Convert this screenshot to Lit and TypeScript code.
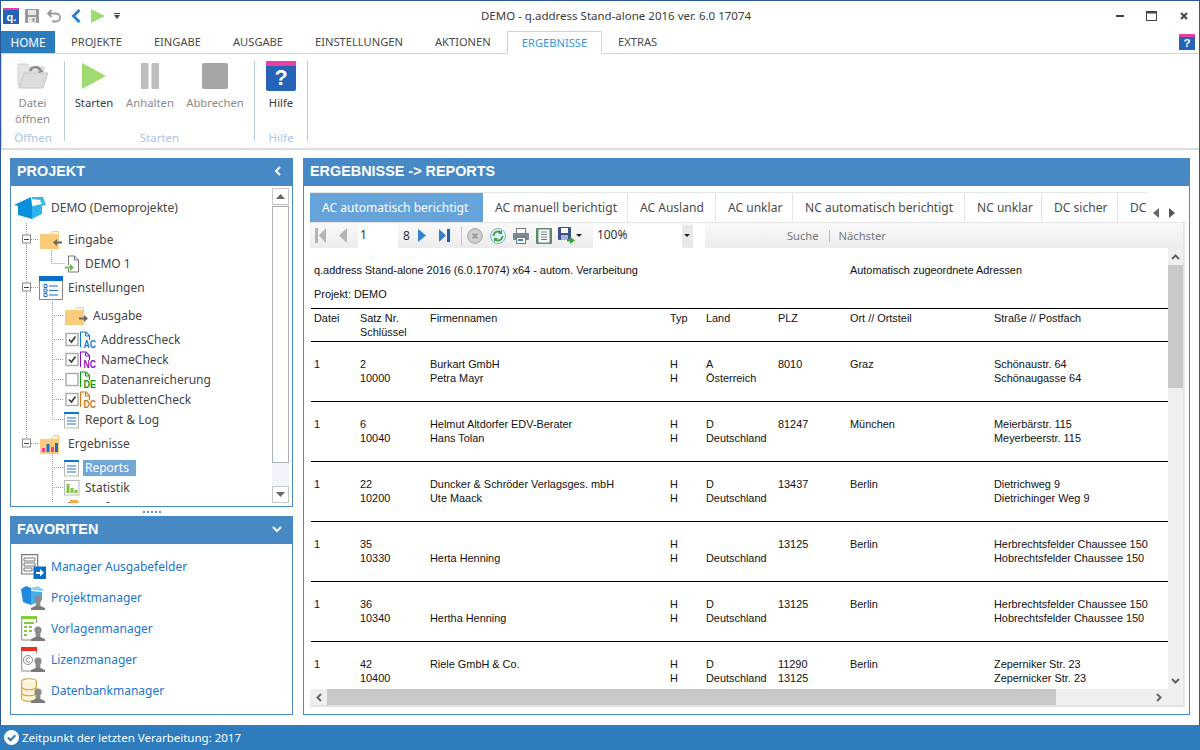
import { LitElement, html, css, svg } from "lit";
import { customElement } from "lit/decorators.js";

const BLUE = "#0f7bd0";
const person = (x: number, y: number) => svg`
  <circle cx="${x + 7}" cy="${y + 5}" r="3.6" fill="#8a8a8a"/><rect x="${x + 4.6}" y="${y + 4}" width="4.8" height="8" fill="#8a8a8a"/>
  <path d="M${x} ${y + 16} v-2 l4.5 -2 h5 l4.5 2 v2z" fill="#7a7a7a"/>`;

const folder = (arrow: "l" | "r" | "") => html`<svg width="26" height="20" viewBox="0 0 26 20">
  <path d="M0 4h9l3-3h6a1 1 0 0 1 1 1v17H0z" fill="#fbcb7c"/><path d="M10 4l2.500-2h5.500v2z" fill="#fff" opacity=".85"/>
  ${arrow === "l" ? svg`<path d="M13 12.500l4-3.500v2.500h5v2h-5v2.500z" fill="#666"/>` : ""}
  ${arrow === "r" ? svg`<path d="M23 12.500l-4-3.500v2.500h-5v2h5v2.500z" fill="#666"/>` : ""}
</svg>`;

const tinyList = html`<svg width="16" height="17" viewBox="0 0 16 17">
  <rect x=".5" y="1.5" width="14" height="14.5" fill="#fff" stroke="#b8b8b8"/><rect x="0" y="0" width="15" height="2" fill="#0a78d2"/>
  <path d="M3 6h9M3 9h9M3 12h9" stroke="#1a76c8" stroke-width="1.2"/></svg>`;

const docIcon = (c: string, t: string, checked: boolean) => html`<svg width="33" height="20" viewBox="0 -1 33 20">
  <rect x="1" y="2.500" width="12" height="12" fill="#fff" stroke="#a9a9a9" stroke-width="1.4"/>
  ${checked ? svg`<path d="M4 8.500l2.400 2.600L10.500 5.500" fill="none" stroke="#444" stroke-width="1.800"/>` : ""}
  <path d="M15.500 16V1h5.500l3.500 3.500V9" fill="${c === "#c47a1e" ? "#f7f5ea" : "#fff"}" stroke="${c}" stroke-width="1.100"/>
  <path d="M20.500 1.500v3.500h3.500" fill="none" stroke="${c}" stroke-width="1"/>
  <text x="18.500" y="16.500" class="tiny" fill="${c}" textLength="12.500" lengthAdjust="spacingAndGlyphs">${t}</text></svg>`;

const TREE: any[] = [
  { mt: 0, x: 14, tx: 51, t: "DEMO (Demoprojekte)", icon: html`<svg width="33" height="24" viewBox="0 0 33 24">
    <path d="M0 9 17 1l1 8v14L4 19v-9z" fill="#0a8fdc"/><path d="M18 23V10l10-2v10z" fill="#30b4ee"/><path d="M18 1l11 0 3 8-4 1-10-1z" fill="#35b8ee"/><path d="M18 3l8 1 2 4-10 2z" fill="#fff"/></svg>` },
  { mt: 12, x: 40, tx: 68, t: "Eingabe", icon: folder("l") },
  { mt: 4, x: 65, tx: 85, t: "DEMO 1", icon: html`<svg width="15" height="18" viewBox="0 0 15 18"><path d="M3.500 10V1h6l4 4v12h-10v-3" fill="#fff" stroke="#777"/><path d="M9.500 1v4h4" fill="none" stroke="#777"/><path d="M0 11.500h5V9l4 3.500L5 16v-2.500H0z" fill="#6cc04a"/></svg>` },
  { mt: 4, x: 39, tx: 68, t: "Einstellungen", icon: html`<svg width="24" height="24" viewBox="0 0 24 24"><rect x=".5" y=".5" width="23" height="23" fill="#fff" stroke="#888"/><rect width="24" height="5" fill="#0a6ec8"/><path d="M5 8.500h3v3H5zM5 13h3v3H5zM5 17.500h3v3H5z" fill="none" stroke="#2070c0"/><path d="M10 10h9M10 14.500h9M10 19h9" stroke="#2070c0" stroke-width="1.200"/></svg>` },
  { mt: 8, x: 65, tx: 93, t: "Ausgabe", icon: folder("r") },
  { mt: 4, x: 65, tx: 101, t: "AddressCheck", icon: docIcon(BLUE, "AC", true) },
  { mt: 0, x: 65, tx: 101, t: "NameCheck", icon: docIcon("#8a12c4", "NC", true) },
  { mt: 0, x: 65, tx: 101, t: "Datenanreicherung", icon: docIcon("#0c9a10", "DE", false) },
  { mt: 0, x: 65, tx: 101, t: "DublettenCheck", icon: docIcon("#c47a1e", "DC", true) },
  { mt: 0, x: 64, tx: 85, t: "Report & Log", icon: tinyList },
  { mt: 4, x: 40, tx: 68, t: "Ergebnisse", icon: html`<svg width="20" height="19" viewBox="0 0 20 19"><path d="M0 4h10l2-2 2-2h4a1 1 0 0 1 1 1v18H0z" fill="#fbcb7c"/><path d="M11 4l3-3h4v3z" fill="#fff" stroke="#fbcb7c" stroke-width=".8"/><rect x="2" y="13" width="3" height="4" fill="#ec3fa0"/><rect x="6.500" y="9" width="3" height="8" fill="#1f6fc8"/><rect x="11" y="12" width="3" height="5" fill="#ec3fa0"/><rect x="15" y="8" width="3" height="9" fill="#1f6fc8"/></svg>` },
  { mt: 4, x: 64, tx: 85, t: "Reports", icon: tinyList, sel: true },
  { mt: 0, x: 64, tx: 85, t: "Statistik", icon: html`<svg width="16" height="16" viewBox="0 0 16 16"><rect x=".5" y=".5" width="14.500" height="14.500" fill="#fff" stroke="#b8b8b8"/><rect x="2.500" y="4" width="3" height="9" fill="#7fc241"/><rect x="6.500" y="8" width="3" height="5" fill="#7fc241"/><rect x="10.500" y="10" width="3" height="3" fill="#7fc241"/></svg>` },
  { mt: 0, x: 64, tx: 85, t: "Prüfung", icon: html`<svg width="16" height="16" viewBox="0 0 16 16"><path d="M0 4l6-2v12H0z" fill="#1f7ad0"/><path d="M6 0h7l3 4v10H6z" fill="#f9a942"/></svg>` },
];

const FAV: any[] = [
  { t: "Manager Ausgabefelder", icon: html`<svg width="25" height="25" viewBox="0 0 25 25"><path d="M13 20H.7V.7h16v12" fill="#fff" stroke="#777" stroke-width="1.200"/><path d="M3 4h11v3H3zM3 9h11v3H3zM3 14h8v3H3z" fill="none" stroke="#777"/><rect x="12.500" y="12.500" width="12.500" height="12.500" fill="#0a6ec8"/><path d="M15 18h4v-3l4 3.700-4 3.700V20h-4z" fill="#fff"/></svg>` },
  { t: "Projektmanager", icon: html`<svg width="25" height="25" viewBox="0 0 25 25"><path d="M0 4l5-3 5 2v17l-8-3z" fill="#1f8ae0"/><path d="M10 3l7-2 6 4-2 1-11-1z" fill="#8fd0f2"/><path d="M10 6l11 1v8l-11 5z" fill="#44aee8"/>${person(10, 9)}</svg>` },
  { t: "Vorlagenmanager", icon: html`<svg width="25" height="25" viewBox="0 0 25 25"><path d="M10 24H.7V1h15v6" fill="#fff" stroke="#888"/><rect width="16" height="3" fill="#84cc3c"/><path d="M3 6h10v2H3zM3 10h3v2H3zM3 14h3v2H3zM3 18h3v2H3zM8 10h3v2H8zM8 14h3v2H8z" fill="#84cc3c"/>${person(10, 9)}</svg>` },
  { t: "Lizenzmanager", icon: html`<svg width="25" height="25" viewBox="0 0 25 25"><path d="M10 24H.7V1h15v6" fill="#fff" stroke="#888"/><rect width="16" height="4" fill="#f0301e"/><circle cx="7" cy="13" r="4.500" fill="#fff" stroke="#888"/><path d="M9 11.500a2.200 2.200 0 1 0 0 3" fill="none" stroke="#888"/>${person(10, 9)}</svg>` },
  { t: "Datenbankmanager", icon: html`<svg width="25" height="25" viewBox="0 0 25 25"><ellipse cx="8" cy="3.500" rx="7.300" ry="2.800" fill="#fff" stroke="#d8a020" stroke-width="1.100"/><path d="M.7 3.500v17c0 1.500 3.300 2.800 7.300 2.800s7.300-1.300 7.300-2.800v-17" fill="#fdf4de" stroke="#d8a020" stroke-width="1.100"/><path d="M.7 9c0 1.500 3.300 2.800 7.300 2.800S15.300 10.500 15.300 9M.7 15c0 1.500 3.300 2.800 7.300 2.800s7.300-1.300 7.300-2.800" fill="none" stroke="#d8a020" stroke-width="1.100"/>${person(10, 9)}</svg>` },
];

const RTABS = [
  ["AC automatisch berichtigt", 173], ["AC manuell berichtigt", 145], ["AC Ausland", 88], ["AC unklar", 77],
  ["NC automatisch berichtigt", 172], ["NC unklar", 77], ["DC sicher", 76], ["DC unklar", 76],
] as [string, number][];

const ROWS = [
  ["1", "2", "Burkart GmbH", "H", "A", "8010", "Graz", "Schönaustr. 64", "10000", "Petra Mayr", "H", "Österreich", "", "", "Schönaugasse 64"],
  ["1", "6", "Helmut Altdorfer EDV-Berater", "H", "D", "81247", "München", "Meierbärstr. 115", "10040", "Hans Tolan", "H", "Deutschland", "", "", "Meyerbeerstr. 115"],
  ["1", "22", "Duncker & Schröder Verlagsges. mbH", "H", "D", "13437", "Berlin", "Dietrichweg 9", "10200", "Ute Maack", "H", "Deutschland", "", "", "Dietrichinger Weg 9"],
  ["1", "35", "", "H", "", "13125", "Berlin", "Herbrechtsfelder Chaussee 150", "10330", "Herta Henning", "H", "Deutschland", "", "", "Hobrechtsfelder Chaussee 150"],
  ["1", "36", "", "H", "D", "13125", "Berlin", "Herbrechtsfelder Chaussee 150", "10340", "Hertha Henning", "H", "Deutschland", "", "", "Hobrechtsfelder Chaussee 150"],
  ["1", "42", "Riele GmbH & Co.", "H", "D", "11290", "Berlin", "Zeperniker Str. 23", "10400", "", "H", "Deutschland", "13125", "", "Zepernicker Str. 23"],
];

@customElement("app-root")
export class AppRoot extends LitElement {
  static styles = css`
    :host { display: block; width: 1200px; height: 750px; font-family: "Noto Sans", "Open Sans", sans-serif; font-size: 12px; color: #444; overflow: hidden; background: #fff; }
    .win { box-sizing: border-box; height: 750px; display: flex; flex-direction: column; border-top: 1px solid #2b579a; border-left: 1px solid #2b579a; border-right: 1px solid #2b579a; }
    .titlebar { height: 30px; display: flex; align-items: center; position: relative; flex: none; }
    .qat { display: flex; align-items: center; padding-left: 2px; height: 30px; }
    .qat svg { display: block; }
    .title { position: absolute; left: 0; right: 0; top: 0; line-height: 30px; text-align: center; color: #3c3c3c; pointer-events: none; font-size: 11.500px; padding-left: 32px; }
    .ctl { margin-left: auto; display: flex; align-items: center; }
    .menu { height: 22px; display: flex; align-items: stretch; flex: none; position: relative; }
    .menu div { padding: 0 16px; line-height: 22px; font-size: 11.150px; white-space: nowrap; color: #4a4a4a; }
    .menu .home { background: #2b7cbd; color: #fff; padding: 0; width: 54px; box-sizing: border-box; text-align: center; font-size: 11.800px; }
    .menu .act { color: #3c94dc; border: 1px solid #d4d4d4; border-bottom: 1px solid #fff; padding: 0 14px; margin-bottom: -1px; z-index: 2; background: #fff; box-sizing: border-box; line-height: 22px; }
    .menu .help { margin-left: auto; padding: 3px 4px 0 0; line-height: 0; }
    .ribbon { height: 97px; flex: none; box-sizing: border-box; display: flex; border-top: 1px solid #d4d4d4; border-bottom: 2px solid #dcdcdc; border-left: 1px solid #d4d4d4; background: #fff; }
    .grp { display: flex; flex-direction: column; border-right: 1px solid #b9c9de; margin: 7px 0; box-sizing: border-box; }
    .grp .btns { display: flex; flex: 1; }
    .grp .cap { text-align: center; color: #a9c5e6; font-size: 11.500px; line-height: 14px; margin-bottom: -4px; }
    .rb { display: flex; flex-direction: column; align-items: center; text-align: center; line-height: 16px; color: #8b8b8b; font-size: 11.300px; }
    .ib { height: 28px; margin: 1px 0 5px; display: flex; align-items: center; }
    .ib svg { display: block; flex: none; }
    .rb.on { color: #3a3a3a; }
    .body { flex: 1; min-height: 0; display: flex; gap: 10px; padding: 8px 9px 10px 9px; }
    .left { width: 283px; flex: none; display: flex; flex-direction: column; }
    .phead { height: 28px; background: #4689c4; color: #fff; font: 700 14.400px/26px "Liberation Sans", sans-serif; padding: 0 0 2px 7px; box-sizing: border-box; display: flex; align-items: center; justify-content: space-between; flex: none; }
    .phead svg { margin-right: 11px; }
    .treebox { height: 321px; box-sizing: border-box; flex: none; border: 1px solid #4689c4; border-top: 0; display: flex; overflow: hidden; }
    .tree { flex: 1; position: relative; overflow: hidden; padding-top: 12px; box-sizing: border-box; margin-bottom: 3px; }
    .conn { position: absolute; left: 0; top: 0; pointer-events: none; }
    .row { height: 20px; display: flex; align-items: center; white-space: nowrap; font-size: 12px; color: #444; position: relative; }
    .slot { display: flex; align-items: center; flex: none; height: 20px; }
    .slot svg { display: block; flex: none; }
    .lbl { line-height: 16px; }
    .lbl.sel { background: #72a6d4; color: #fff; margin-left: -2px; padding: 0 2px; width: 49px; }
    .tiny { font: 700 10px "Liberation Sans", sans-serif; }
    .sb { width: 17px; flex: none; margin: 2px 3px 3px 0; display: flex; flex-direction: column; background: #f0f3f9; }
    .sbtn { height: 17px; box-sizing: border-box; border: 1px solid #c8c8c8; background: #fff; display: flex; align-items: center; justify-content: center; flex: none; }
    .sthumb { height: 257px; box-sizing: border-box; border: 1px solid #a9b1b9; background: #fff; flex: none; margin-top: 1px; }
    .strack { flex: 1; }
    .grip { height: 9px; flex: none; display: flex; justify-content: center; align-items: center; gap: 2px; }
    .grip i { width: 2px; height: 2px; background: #5a8fc0; display: block; }
    .favbox { flex: 1; min-height: 0; border: 1px solid #4689c4; border-top: 0; padding-top: 7px; box-sizing: border-box; }
    .fav { height: 31px; display: flex; align-items: center; padding-left: 10px; gap: 5px; color: #1a76c8; font-size: 12px; white-space: nowrap; }
    .fav svg { display: block; width: 25px; height: 25px; flex: none; }
    .right { flex: 1; min-width: 0; display: flex; flex-direction: column; }
    .rbox { flex: 1; min-height: 0; border: 1px solid #4689c4; border-top: 0; padding: 6px 6px 7px 6px; display: flex; flex-direction: column; }
    .rtabs { height: 30px; flex: none; display: flex; position: relative; }
    .rstrip { display: flex; width: 838px; overflow: hidden; flex: none; border-top: 1px solid #e8e8e8; box-sizing: border-box; }
    .rtab { flex: none; box-sizing: border-box; border-right: 1px solid #e4e4e4; text-align: left; padding-left: 12px; line-height: 30px; font-size: 12.050px; white-space: nowrap; color: #4a4a4a; overflow: hidden; }
    .rtab.act { background: #66a3d9; color: #fff; border: 0; margin-top: -1px; line-height: 31px; height: 31px; }
    .rarrows { display: flex; align-items: center; gap: 10px; padding: 12px 0 0 5px; }
    .frame { flex: 1; min-height: 0; display: flex; flex-direction: column; border-right: 2px solid #e3e3e3; border-bottom: 2px solid #e3e3e3; width: 873px; }
    .tb { height: 26px; flex: none; display: flex; align-items: center; background: linear-gradient(#f9f9f9, #ececec); border-top: 1px solid #e4e4e4; box-sizing: border-box; position: relative; }
    .tb .ic { display: block; flex: none; }
    .tb .in { background: #fff; height: 25px; line-height: 24px; flex: none; box-sizing: border-box; color: #333; font-size: 12px; }
    .tsep { width: 1px; height: 18px; background: #c4c4c4; flex: none; }
    .tt { color: #777; font-size: 11.200px; }
    .rep { flex: 1; min-height: 0; display: grid; grid-template-columns: 1fr 15px; grid-template-rows: 1fr 16px; background: #efefef; }
    .paper { background: #fff; overflow: hidden; font: 10.900px/14px "Liberation Sans", sans-serif; color: #111; position: relative; }
    .paper .hdr { display: flex; padding: 15px 0 0 4px; height: 14px; }
    .paper .hdr span:first-child { width: 536px; }
    .paper .proj { padding: 10px 0 7px 4px; }
    .g { display: grid; grid-template-columns: 46px 70px 240px 36px 72px 72px 144px 1fr; margin-left: 1px; padding-left: 3px; border-top: 1px solid #000; white-space: nowrap; }
    .g.h { height: 33px; padding-top: 2px; box-sizing: border-box; }
    .g.d { height: 60px; padding-top: 15px; box-sizing: border-box; }
    .vsb { display: flex; flex-direction: column; align-items: center; }
    .vsb .u { height: 17px; display: flex; align-items: center; justify-content: center; flex: none; }
    .vsb .th { height: 123px; width: 15px; background: #c8c8c8; flex: none; }
    .vsb .sp { flex: 1; }
    .hsb { display: flex; align-items: center; }
    .hsb .l { width: 17px; display: flex; justify-content: center; flex: none; }
    .hsb .th { height: 16px; width: 729px; background: #c8c8c8; flex: none; }
    .hsb .sp { flex: 1; }
    .hsb .r { width: 18px; display: flex; justify-content: center; flex: none; }
    .status { height: 25px; flex: none; background: #2e7bbd; margin: 0 -1px; display: flex; align-items: center; color: #fff; font-size: 11.500px; padding-left: 4px; gap: 3px; }
    .status svg { display: block; }
  `;

  private help(s: number) {
    const t = Math.round(s * 0.17);
    return html`<svg width="${s}" height="${s}" viewBox="0 0 ${s} ${s}" style="display:block">
      <rect y="0" width="${s}" height="${s}" rx="${s > 20 ? 2 : 0}" fill="#2563b8"/>
      <rect y="0" width="${s}" height="${t}" fill="#e93fa2"/>
      <text x="${s / 2}" y="${s * 0.8}" text-anchor="middle" fill="#fff" font-family="Liberation Sans,sans-serif" font-weight="700" font-size="${s * 0.72}">?</text></svg>`;
  }

  private connectors() {
    const d = "#9a9a9a";
    const ln = (x1: number, y1: number, x2: number, y2: number) =>
      svg`<line x1="${x1 - 11}" y1="${y1 - 186}" x2="${x2 - 11}" y2="${y2 - 186}" stroke="${d}" stroke-dasharray="1 1"/>`;
    const exp = (y: number) => svg`<rect x="${22 - 10.5}" y="${y - 4 - 186}" width="8" height="8" fill="#fff" stroke="#888"/><line x1="${24 - 11}" x2="${29 - 11}" y1="${y + 0.5 - 186}" y2="${y + 0.5 - 186}" stroke="#444"/>`;
    return svg`<svg class="conn" width="262" height="320">
      ${ln(26.5, 223, 26.5, 443)}
      ${ln(31, 239.5, 39, 239.5)}${ln(31, 287.5, 39, 287.5)}${ln(31, 443.5, 39, 443.5)}
      ${ln(51.5, 251, 51.5, 263)}${ln(51.5, 263.5, 65, 263.5)}
      ${ln(52.5, 299, 52.5, 419)}
      ${[315, 339, 359, 379, 399, 419].map((y) => ln(52, y + 0.5, 64, y + 0.5))}
      ${ln(52.5, 453, 52.5, 507)}
      ${[467, 487].map((y) => ln(52, y + 0.5, 64, y + 0.5))}
      ${exp(239)}${exp(287)}${exp(443)}
    </svg>`;
  }

  render() {
    const tri = (d: string, c = "#666", w = 9, h = 7) => html`<svg width="${w}" height="${h}" viewBox="0 0 ${w} ${h}" class="ic"><path d="${d}" fill="${c}"/></svg>`;
    return html`<div class="win">
      <div class="titlebar">
        <div class="qat">
          <svg width="16" height="16" viewBox="0 0 16 16"><rect width="16" height="16" fill="#2563b8"/><rect width="16" height="2" fill="#e93fa2"/><text x="3.500" y="13" fill="#fff" font-family="Liberation Sans,sans-serif" font-weight="700" font-size="11">q.</text></svg>
          <svg width="14" height="14" viewBox="0 0 14 14" style="margin-left:6px"><path d="M0 0h14v14H0z" fill="#9a9a9a"/><rect x="3" y="1" width="8" height="5" fill="#e6e6e6"/><rect x="3" y="8" width="8" height="6" fill="#e6e6e6"/><rect x="7.500" y="9" width="2" height="4" fill="#9a9a9a"/></svg>
          <svg width="14" height="14" viewBox="0 0 14 14" style="margin-left:8px"><path d="M1 4.500h8a4 4 0 0 1 0 8H5M4.500 1 1 4.500 4.500 8" fill="none" stroke="#9a9a9a" stroke-width="1.800"/></svg>
          <svg width="10" height="14" viewBox="0 0 10 14" style="margin-left:10px"><path d="M8.500 1 2.500 7l6 6" fill="none" stroke="#2f80d0" stroke-width="3"/></svg>
          <svg width="14" height="14" viewBox="0 0 14 14" style="margin-left:10px"><path d="M0 0l14 7-14 7z" fill="#9fdc6f"/></svg>
          <svg width="6" height="6" viewBox="0 0 6 6" style="margin-left:9px"><path d="M0 0h6v1H0zM0 2h6L3 6z" fill="#444"/></svg>
        </div>
        <div class="title">DEMO - q.address Stand-alone 2016 ver. 6.0 17074</div>
        <div class="ctl">
          <svg width="8" height="2" viewBox="0 0 8 2"><rect width="8" height="2" fill="#444"/></svg>
          <svg width="11" height="10" viewBox="0 0 11 10" style="margin-left:22px"><rect x=".5" y=".5" width="10" height="9" fill="none" stroke="#444"/><rect width="11" height="2.500" fill="#444"/></svg>
          <svg width="8" height="8" viewBox="0 0 8 8" style="margin:0 11px 0 23px"><path d="M1 1l6 6M7 1 1 7" stroke="#444" stroke-width="2"/></svg>
        </div>
      </div>
      <div class="menu">
        <div class="home">HOME</div><div>PROJEKTE</div><div>EINGABE</div><div>AUSGABE</div><div>EINSTELLUNGEN</div><div>AKTIONEN</div>
        <div class="act">ERGEBNISSE</div><div>EXTRAS</div>
        <div class="help">${this.help(16)}</div>
      </div>
      <div class="ribbon">
        <div class="grp" style="width:63px">
          <div class="btns"><div class="rb" style="width:61px">
            <div class="ib"><svg width="32" height="28" viewBox="0 0 32 28"><path d="M1 24V2h9l3 3h14v5H8L2 24" fill="#e4e4e4" stroke="#d0d0d0"/><path d="M7 11h24l-5 15H2z" fill="#dcdcdc" stroke="#c8c8c8"/><path d="M13 9c2-5 8-5 10-1" fill="none" stroke="#8a8a8a" stroke-width="2.500"/><path d="M26 10l-5 1 3-5z" fill="#8a8a8a"/></svg></div>
            <span>Datei<br/>öffnen</span></div></div>
          <div class="cap">Öffnen</div>
        </div>
        <div class="grp" style="width:190px">
          <div class="btns">
            <div class="rb on" style="width:56px;margin-left:1px"><div class="ib"><svg width="24" height="26" viewBox="0 0 24 26"><path d="M0 0l24 13L0 26z" fill="#9fdc6f"/></svg></div><span>Starten</span></div>
            <div class="rb" style="width:56px"><div class="ib"><svg width="18" height="26" viewBox="0 0 18 26"><rect width="7.500" height="26" rx="1" fill="#bdbdbd"/><rect x="10.500" width="7.500" height="26" rx="1" fill="#bdbdbd"/></svg></div><span>Anhalten</span></div>
            <div class="rb" style="width:74px"><div class="ib"><svg width="26" height="26" viewBox="0 0 26 26"><rect width="26" height="26" rx="2" fill="#a6a6a6"/></svg></div><span>Abbrechen</span></div>
          </div>
          <div class="cap">Starten</div>
        </div>
        <div class="grp" style="width:53px">
          <div class="btns"><div class="rb on" style="width:52px"><div class="ib">${this.help(30)}</div><span>Hilfe</span></div></div>
          <div class="cap">Hilfe</div>
        </div>
      </div>
      <div class="body">
        <div class="left">
          <div class="phead"><span>PROJEKT</span><svg width="8" height="10" viewBox="0 0 8 10"><path d="M6 1 2 5l4 4" fill="none" stroke="#fff" stroke-width="2"/></svg></div>
          <div class="treebox">
            <div class="tree">
              ${TREE.map((r) => html`<div class="row" style="margin-top:${r.mt}px;padding-left:${r.x - 11}px">
                <div class="slot" style="width:${r.tx - r.x}px">${r.icon}</div>
                <span class="lbl ${r.sel ? "sel" : ""}">${r.t}</span></div>`)}
              ${this.connectors()}
            </div>
            <div class="sb">
              <div class="sbtn"><svg width="9" height="5" viewBox="0 0 9 5"><path d="M4.500 0 9 5H0z" fill="#666"/></svg></div>
              <div class="sthumb"></div>
              <div class="strack"></div>
              <div class="sbtn"><svg width="9" height="5" viewBox="0 0 9 5"><path d="M0 0h9L4.500 5z" fill="#666"/></svg></div>
            </div>
          </div>
          <div class="grip"><i></i><i></i><i></i><i></i><i></i></div>
          <div class="phead"><span>FAVORITEN</span><svg width="10" height="8" viewBox="0 0 10 8"><path d="M1 2l4 4 4-4" fill="none" stroke="#fff" stroke-width="2"/></svg></div>
          <div class="favbox">
            ${FAV.map((f) => html`<div class="fav">${f.icon}<span>${f.t}</span></div>`)}
          </div>
        </div>
        <div class="right">
          <div class="phead"><span>ERGEBNISSE -&gt; REPORTS</span></div>
          <div class="rbox">
            <div class="rtabs">
              <div class="rstrip">${RTABS.map(([t, w], i) => html`<div class="rtab ${i === 0 ? "act" : ""}" style="width:${w}px">${t}</div>`)}</div>
              <div class="rarrows">
                <svg width="6" height="10" viewBox="0 0 6 10"><path d="M6 0v10L0 5z" fill="#666"/></svg>
                <svg width="6" height="10" viewBox="0 0 6 10"><path d="M0 0v10l6-5z" fill="#555"/></svg>
              </div>
            </div>
            <div class="frame">
              <div class="tb">
                <svg class="ic" width="11" height="15" viewBox="0 0 11 15" style="margin-left:5px"><rect width="3" height="15" fill="#b4b4b4"/><path d="M11 0v15L4 7.500z" fill="#b4b4b4"/></svg>
                <svg class="ic" width="8" height="15" viewBox="0 0 8 15" style="margin-left:13px"><path d="M8 0v15L0 7.500z" fill="#b4b4b4"/></svg>
                <div class="in" style="width:40px;margin-left:11px;padding-left:2px">1</div>
                <span style="margin-left:5px;color:#333">8</span>
                <svg class="ic" width="8" height="13" viewBox="0 0 8 13" style="margin-left:8px"><path d="M0 0v13l8-6.500z" fill="#2f80d0"/></svg>
                <svg class="ic" width="11" height="13" viewBox="0 0 11 13" style="margin-left:13px"><path d="M0 0v13l7-6.500z" fill="#2f80d0"/><rect x="8" width="3" height="13" fill="#2460a8"/></svg>
                <div class="tsep" style="margin-left:11px"></div>
                <svg class="ic" width="16" height="16" viewBox="0 0 16 16" style="margin-left:5px"><circle cx="8" cy="8" r="7.500" fill="#c8c8c8" stroke="#b0b0b0"/><circle cx="8" cy="8" r="5" fill="#d8d8d8"/><path d="M5.500 5.500l5 5M10.500 5.500l-5 5" stroke="#9a9a9a" stroke-width="2"/></svg>
                <svg class="ic" width="16" height="16" viewBox="0 0 16 16" style="margin-left:7px"><circle cx="8" cy="8" r="7.500" fill="#e4f0fa" stroke="#7fb0dc"/><path d="M3.500 8a4.500 4.500 0 0 1 7.500-3.300M12.500 8a4.500 4.500 0 0 1-7.500 3.300" fill="none" stroke="#3aa63a" stroke-width="1.800"/><path d="M12 2v4H8zM4 14v-4h4z" fill="#3aa63a"/></svg>
                <svg class="ic" width="16" height="16" viewBox="0 0 16 16" style="margin-left:7px"><rect x="3.500" y=".5" width="9" height="5" fill="#fff" stroke="#777"/><rect y="5" width="16" height="7" rx="1" fill="#7a8794"/><rect x="3.500" y="9.500" width="9" height="6" fill="#fff" stroke="#777"/><rect x="5" y="11" width="5" height="2" fill="#3c80c0"/></svg>
                <svg class="ic" width="16" height="16" viewBox="0 0 16 16" style="margin-left:7px"><rect width="16" height="16" rx="1" fill="#5c8c6c"/><rect x="2.500" y="1.500" width="11" height="13" fill="#fff"/><path d="M5 4h6M5 6.500h6M5 9h6M5 11.500h6" stroke="#6a7a80"/></svg>
                <svg class="ic" width="17" height="17" viewBox="0 0 17 17" style="margin-left:6px"><rect width="13" height="13" rx="1" fill="#3e4f90"/><rect x="3" y="1" width="7" height="5" fill="#fff"/><rect x="3" y="8" width="7" height="5" fill="#a9b4d4"/><path d="M9 12h3V9.500l5 4-5 3.500V14.500H9z" fill="#3aa63a"/></svg>
                <svg class="ic" width="6" height="3" viewBox="0 0 6 3" style="margin-left:1px"><path d="M0 0h6L3 3z" fill="#222"/></svg>
                <div class="in" style="width:89px;margin-left:11px;padding-left:4px">100%</div>
                <div style="width:11px;height:22px;background:#e8e8e8;display:flex;align-items:center;justify-content:center;flex:none">${tri("M0 0h6L3 3z", "#222", 6, 3)}</div>
                <div class="in" style="width:12px"></div>
                <span class="tt" style="margin-left:82px">Suche</span>
                <div class="tsep" style="height:12px;background:#bbb;margin:0 9px 0 10px"></div>
                <span class="tt">Nächster</span>
              </div>
              <div class="rep">
                <div class="paper">
                  <div class="hdr"><span>q.address Stand-alone 2016 (6.0.17074) x64 - autom. Verarbeitung</span><span>Automatisch zugeordnete Adressen</span></div>
                  <div class="proj">Projekt: DEMO</div>
                  <div class="g h"><span>Datei</span><span>Satz Nr.<br/>Schlüssel</span><span>Firmennamen</span><span>Typ</span><span>Land</span><span>PLZ</span><span>Ort // Ortsteil</span><span>Straße // Postfach</span></div>
                  ${ROWS.map((r) => html`<div class="g d">
                    <span>${r[0]}</span><span>${r[1]}<br/>${r[8]}</span><span>${r[2]}<br/>${r[9]}</span><span>${r[3]}<br/>${r[10]}</span><span>${r[4]}<br/>${r[11]}</span><span>${r[5]}<br/>${r[12]}</span><span>${r[6]}</span><span>${r[7]}<br/>${r[14]}</span>
                  </div>`)}
                </div>
                <div class="vsb">
                  <div class="u"><svg width="9" height="6" viewBox="0 0 9 6"><path d="M1 5l3.500-3.500L8 5" fill="none" stroke="#666" stroke-width="2"/></svg></div>
                  <div class="th"></div><div class="sp"></div>
                  <div class="u"><svg width="9" height="6" viewBox="0 0 9 6"><path d="M1 1l3.500 3.500L8 1" fill="none" stroke="#666" stroke-width="2"/></svg></div>
                </div>
                <div class="hsb">
                  <div class="l"><svg width="6" height="9" viewBox="0 0 6 9"><path d="M5 1 1.500 4.500 5 8" fill="none" stroke="#666" stroke-width="2"/></svg></div>
                  <div class="th"></div><div class="sp"></div>
                  <div class="r"><svg width="6" height="9" viewBox="0 0 6 9"><path d="M1 1l3.500 3.500L1 8" fill="none" stroke="#666" stroke-width="2"/></svg></div>
                </div>
                <div></div>
              </div>
            </div>
          </div>
        </div>
      </div>
      <div class="status">
        <svg width="15" height="15" viewBox="0 0 15 15"><circle cx="7.500" cy="7.500" r="7.500" fill="#fff"/><path d="M3.800 7.500l2.800 2.800 4.700-5" fill="none" stroke="#2e7bbd" stroke-width="2"/></svg>
        <span>Zeitpunkt der letzten Verarbeitung: 2017</span>
      </div>
    </div>`;
  }
}
